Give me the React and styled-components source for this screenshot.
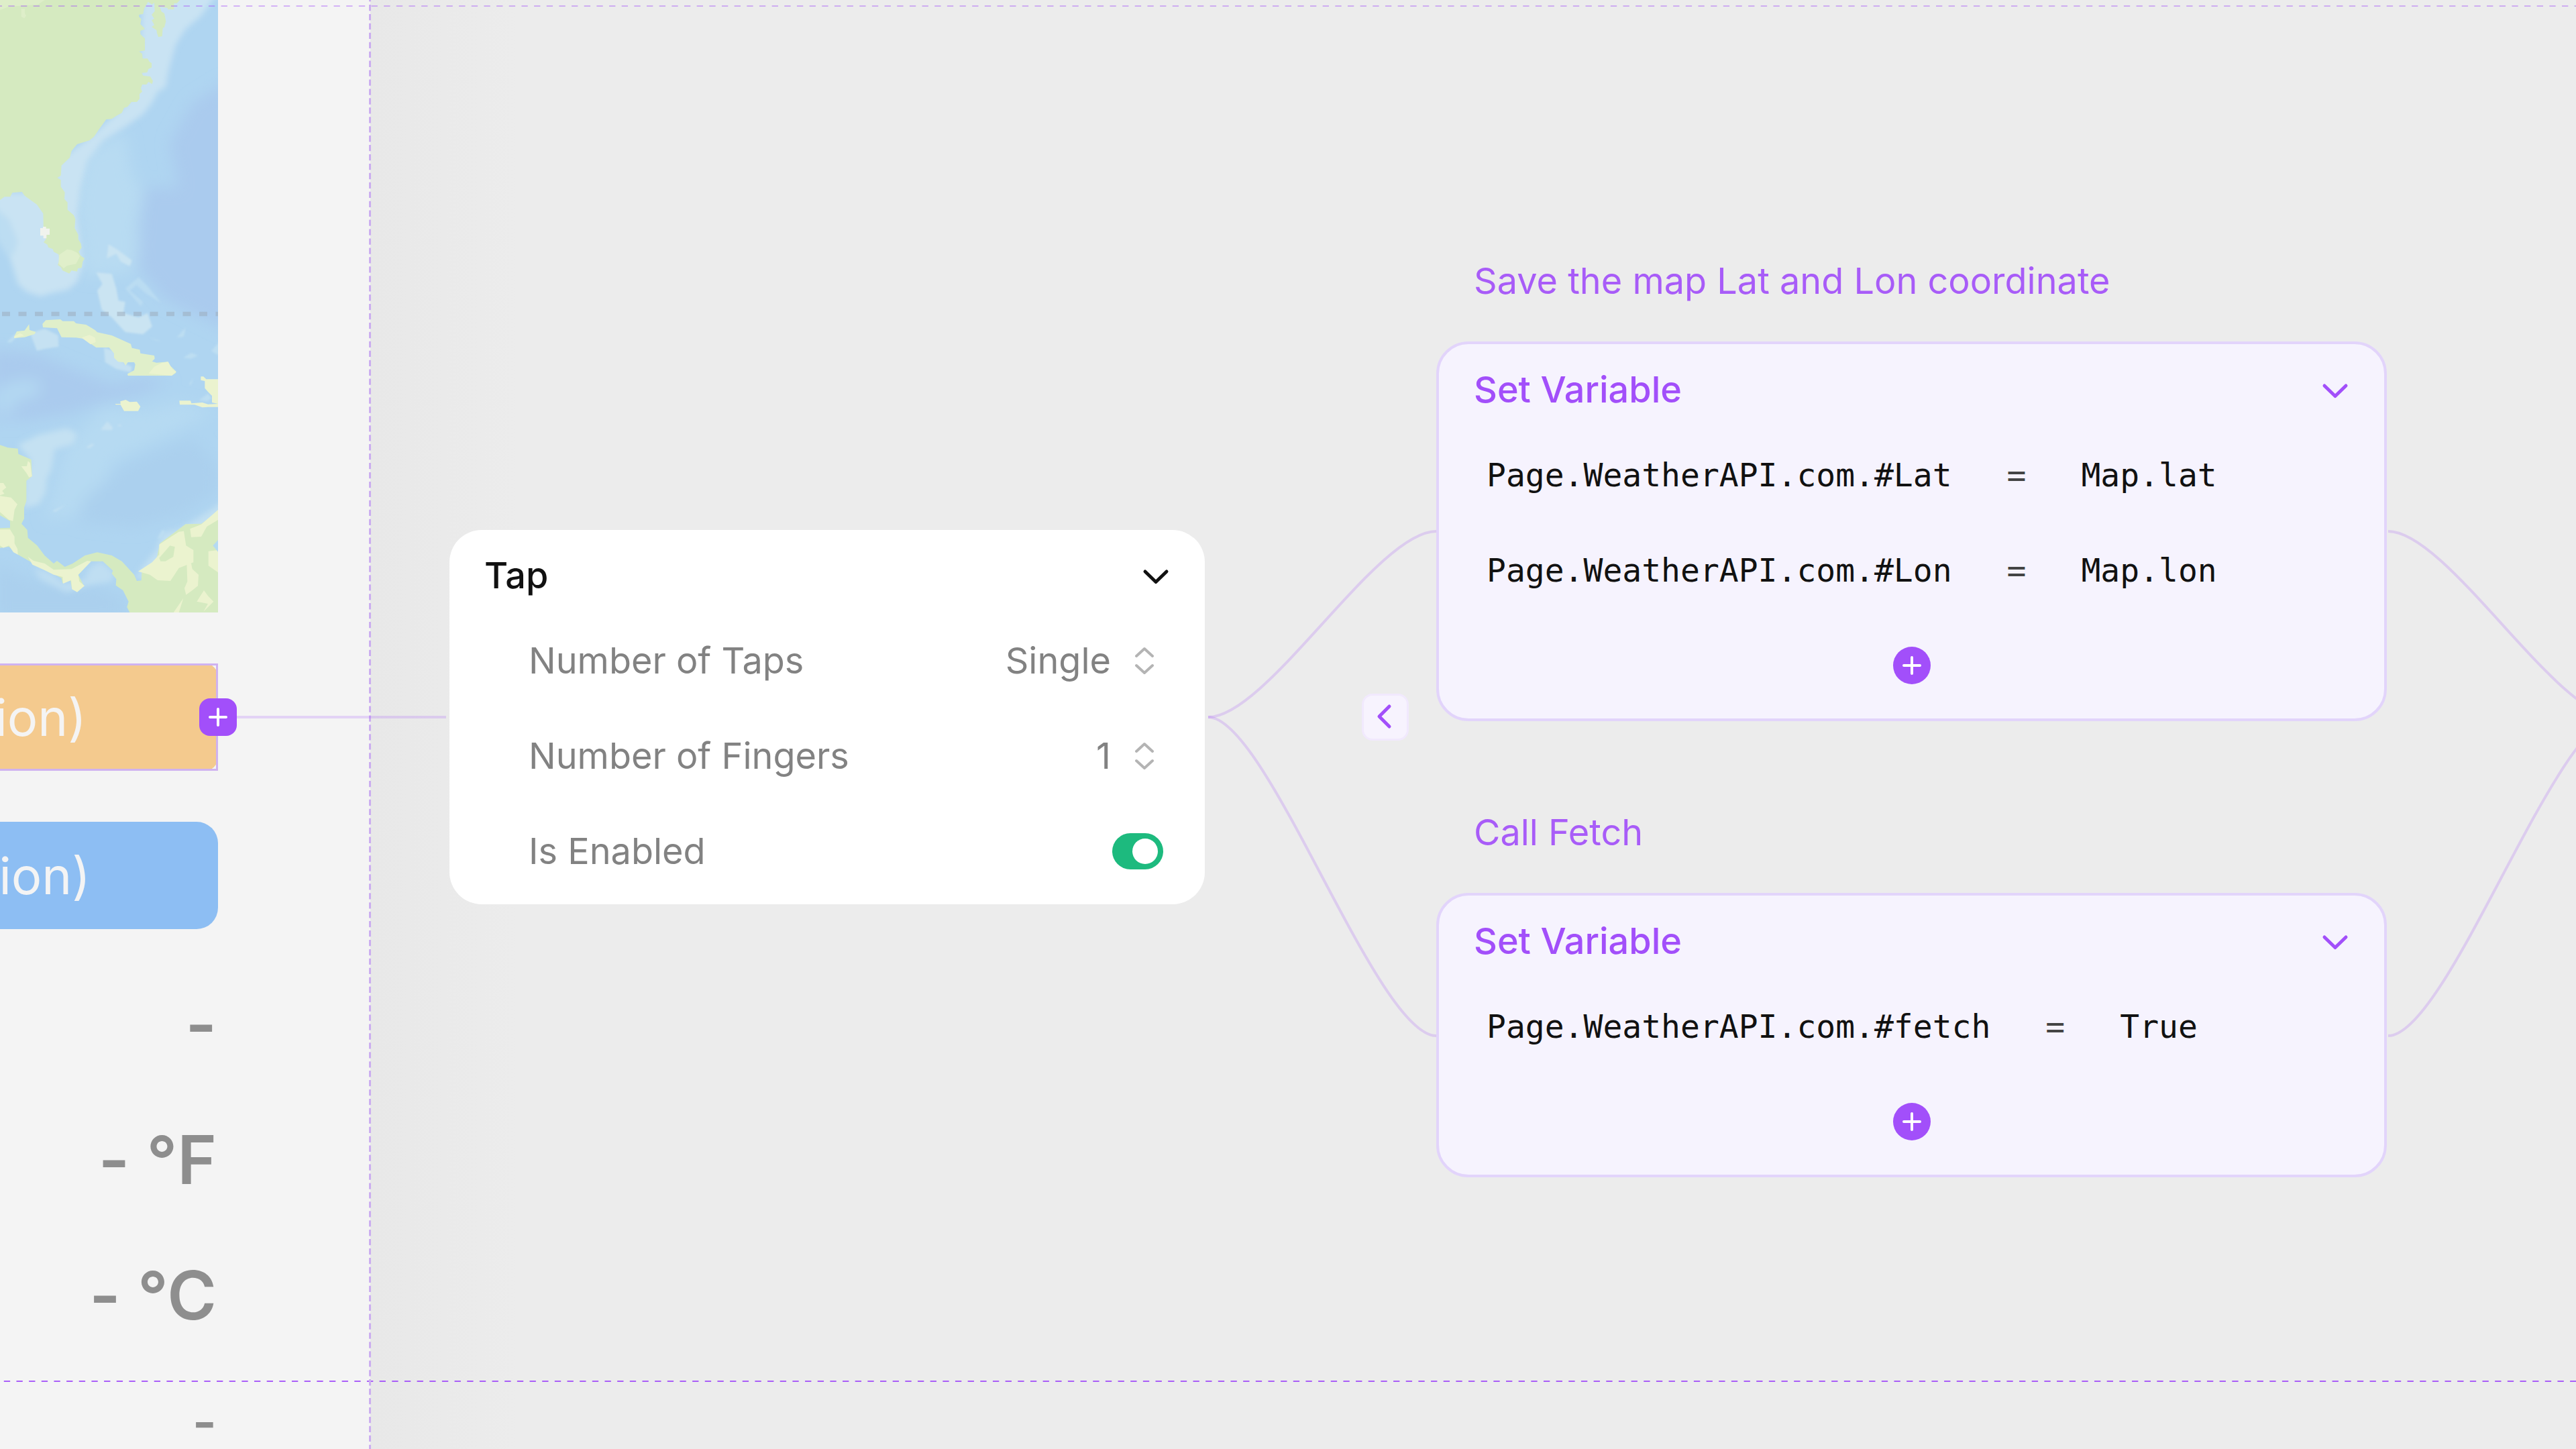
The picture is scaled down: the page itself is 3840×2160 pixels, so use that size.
import React, { useState } from "react";
import styled, { createGlobalStyle, css } from "styled-components";

const GlobalStyle = createGlobalStyle`
  * { box-sizing: border-box; }
  body { margin: 0; background: #ececec; }
  button, select, input { font: inherit; color: inherit; margin: 0; }
`;

const sans = `Inter, "Liberation Sans", sans-serif`;
const mono = `"DejaVu Sans Mono", "Liberation Mono", monospace`;
const purple = "#a24ffa";

const Workspace = styled.main`
  position: relative;
  display: flex;
  height: 100vh;
  overflow: hidden;
  font-family: ${sans};
  font-size: 54px;
  line-height: 64px;
`;

const Screen = styled.section`
  display: flex;
  flex-direction: column;
  flex: none;
  gap: 76px;
  width: 552px;
  background: #f4f4f4;
`;

const Canvas = styled.section`
  flex: 1;
  background: linear-gradient(90deg, #e8e8e8, #ececec 220px);
`;

const MapArt = styled.svg`
  display: block;
  flex: none;
  width: 325px;
  height: 913px;
`;

const Holder = styled.div`
  position: relative;
  width: 325px;
`;

const ScreenButton = styled.button`
  display: flex;
  align-items: center;
  justify-content: flex-end;
  width: 100%;
  height: 160px;
  padding: 0 ${(p) => p.$inset}px 0 0;
  border: 0;
  border-radius: 0 ${(p) => p.$radius}px ${(p) => p.$radius}px 0;
  background: ${(p) => p.$tone};
  color: #f4f4f4;
  font-size: 76px;
  white-space: nowrap;
`;

const Selection = styled.div`
  position: absolute;
  inset: 0 0 0 -4px;
  border: 3px solid #cfb2f0;
  pointer-events: none;
`;

const Connector = styled.button`
  position: absolute;
  top: 52px;
  right: -28px;
  display: grid;
  place-items: center;
  width: 56px;
  height: 56px;
  padding: 0;
  border: 0;
  border-radius: 16px;
  background: ${purple};
  color: #fff;
`;

const Readings = styled.div`
  display: flex;
  flex-direction: column;
  gap: 76px;
  width: 325px;
  padding: 3px 2px 0 0;
  color: #8e8e8e;
  font-weight: 600;
  text-align: right;
`;

const Reading = styled.div`
  font-size: ${(p) => (p.$small ? 78 : 100)}px;
  line-height: ${(p) => (p.$small ? 100 : 126)}px;
`;

const Overlay = styled.svg`
  position: absolute;
  inset: 0;
  width: 100%;
  height: 100%;
  overflow: visible;
  pointer-events: none;
`;

const Node = styled.div`
  position: absolute;
  left: ${(p) => p.$x}px;
  top: ${(p) => p.$y}px;
  width: ${(p) => p.$w}px;
`;

const ActionColumn = styled(Node)`
  display: flex;
  flex-direction: column;
  gap: 134px;
`;

const Action = styled.section`
  display: flex;
  flex-direction: column;
  gap: 58px;
`;

const Note = styled.p`
  margin: 0;
  padding-left: 56px;
  color: #a85cf8;
`;

const Card = styled.div`
  padding: 12px 0 8px;
  border-radius: 48px;
  background: #fff;
  ${(p) =>
    p.$accent &&
    css`
      border: 4px solid #e2d4fb;
      background: #f6f3fe;
    `}
`;

const CardHeader = styled.header`
  display: flex;
  align-items: center;
  justify-content: space-between;
  height: 112px;
  padding: 0 52px;
  color: ${(p) => (p.$accent ? purple : "#111")};
`;

const CardTitle = styled.h2`
  margin: 0;
  font-size: 54px;
  font-weight: 500;
`;

const IconButton = styled.button`
  display: grid;
  place-items: center;
  padding: 0;
  border: 0;
  background: none;
`;

const Field = styled.div`
  display: flex;
  align-items: center;
  justify-content: space-between;
  height: 142px;
  padding: 0 62px 0 118px;
  color: #828282;
`;

const Picker = styled.span`
  display: flex;
  align-items: center;
  gap: 36px;
  padding-right: 14px;
`;

const Select = styled.select`
  appearance: none;
  padding: 0;
  border: 0;
  background: none;
  text-align-last: right;
`;

const Toggle = styled.input`
  appearance: none;
  display: flex;
  align-items: center;
  width: 76px;
  height: 54px;
  padding: 8px;
  border-radius: 27px;
  background: #dcdcdc;
  &::before {
    content: "";
    width: 38px;
    height: 38px;
    border-radius: 50%;
    background: #fff;
  }
  &:checked {
    justify-content: flex-end;
    background: #1dba7e;
  }
`;

const Assignment = styled.div`
  display: flex;
  align-items: center;
  gap: 82px;
  height: 142px;
  padding-left: 71px;
  color: #111;
  font-family: ${mono};
  font-size: 48px;
`;

const Equals = styled.span`
  color: #444;
`;

const AddRow = styled.div`
  display: grid;
  place-items: center;
  height: 142px;
`;

const AddButton = styled.button`
  display: grid;
  place-items: center;
  width: 56px;
  height: 56px;
  padding: 0;
  border: 0;
  border-radius: 50%;
  background: ${purple};
  color: #fff;
`;

const CollapseButton = styled.button`
  display: grid;
  place-items: center;
  width: 70px;
  height: 70px;
  padding: 0;
  border: 3px solid #f1e9fd;
  border-radius: 16px;
  background: #f7f3fe;
  color: ${purple};
`;

const stroke = { fill: "none", stroke: "currentColor", strokeLinecap: "round", strokeLinejoin: "round" };

const ChevronDown = () => (
  <svg width="42" height="32" viewBox="0 0 42 32" {...stroke} strokeWidth="5" aria-hidden="true">
    <path d="M5 10l16 15.500 16-15.500" />
  </svg>
);

const ChevronLeft = () => (
  <svg width="28" height="42" viewBox="0 0 28 42" {...stroke} strokeWidth="5" aria-hidden="true">
    <path d="M20 5L5 20l15 15" />
  </svg>
);

const UpDown = () => (
  <svg width="28" height="42" viewBox="0 0 28 42" {...stroke} stroke="#b4b4b4" strokeWidth="4" aria-hidden="true">
    <path d="M2 14L14 3l12 11M2 28l12 11 12-11" />
  </svg>
);

const Plus = () => (
  <svg width="28" height="28" viewBox="0 0 28 28" {...stroke} strokeWidth="4" aria-hidden="true">
    <path d="M14 2v24M2 14h24" />
  </svg>
);

function MapView() {
  return (
    <MapArt viewBox="0 0 975 2739" preserveAspectRatio="none" role="img" aria-label="Map of the Caribbean">
      <defs>
        <filter id="deep" x="-30%" y="-30%" width="160%" height="160%">
          <feGaussianBlur stdDeviation="32" />
        </filter>
        <filter id="shelf" x="-20%" y="-20%" width="140%" height="140%">
          <feGaussianBlur stdDeviation="13" />
        </filter>
        <filter id="edge" x="-10%" y="-10%" width="120%" height="120%">
          <feGaussianBlur stdDeviation="5" />
        </filter>
      </defs>
      <rect width="975" height="2739" fill="#afd5f1" />

      <g filter="url(#deep)">
        <path fill="#b8dbf2" d="M380 680L560 590 590 780 640 860 610 1010 625 1100 590 1220 380 1240 340 900Z" />
        <path fill="#aacbee" d="M1020 360L860 460 760 640 800 840 650 840 625 1000 620 1200 740 1340 860 1400 1020 1480Z" />
        <path fill="#aacbee" d="M-40 1560L160 1580 300 1640 500 1720 640 1690 760 1710 600 1770 460 1800 300 1850 120 1880 -40 1880Z" />
        <path fill="#b3d8f2" d="M-20 1740L80 1700 180 1700 170 1770 60 1800 60 1850 -20 1850Z" />
        <path fill="#b6daf2" d="M460 1820L640 1840 800 1800 960 1840 760 1940 500 2060 420 2300 200 2320 300 2000Z" />
        <path fill="#abd0ee" d="M560 2080L720 2010 860 1960 975 2080 975 2200 820 2300 600 2360 340 2330 380 2230Z" />
        <path fill="#abd0ee" d="M-20 2520L160 2600 440 2620 560 2680 560 2760 -20 2760Z" />
      </g>

      <g filter="url(#shelf)">
        <path fill="#c9e3f3" d="M640 -40H980L900 70 830 130 785 200 755 310 740 390 705 410 680 460 640 510 570 560 460 630 390 720 360 840 345 960 362 1090 372 1180 345 1260 305 1295 230 1310 180 1325 120 1305 80 1270 50 1170 20 1090 -20 1060V860H120L260 900 240 740 420 600 560 470 620 380Z" />
        <path fill="#bcddf2" d="M-20 930L40 980 80 1080 60 1140 30 1140 -20 1060Z" />
        <path fill="#c4e1f2" d="M80 1990L170 1945 300 1915 345 1940 330 1985 245 2010 230 2100 210 2140 205 2200 175 2255 105 2275 110 2140 140 2060Z" />
        <path fill="#bfdef2" d="M150 2540L220 2560 290 2610 380 2590 400 2540 450 2510 510 2560 500 2600 380 2620 300 2650 180 2590Z" />
        <path fill="#c2e0f2" d="M640 2530L700 2460 720 2400 740 2380 800 2370 960 2270 1000 2240V2330L640 2590 600 2590Z" />
      </g>

      <g filter="url(#edge)">
        <path fill="#cae4f2" d="M430 1218L500 1225 520 1290 530 1345 560 1350 552 1400 620 1420 660 1400 680 1460 640 1495 560 1485 500 1420 455 1385 435 1300 458 1270Z" />
        <path fill="#cae4f2" d="M485 1092L530 1120 590 1165 580 1190 540 1170 520 1135 478 1155Z" />
        <path fill="#badcf2" d="M560 1290L620 1240 660 1280 720 1355 650 1310 610 1275 580 1300 640 1350 630 1370Z" />
        <path fill="#c5e1f2" d="M135 1490L200 1470 260 1500 262 1550 200 1560 165 1568Z" />
        <path fill="#c5e1f2" d="M465 1555L510 1570 555 1625 590 1640 585 1665 520 1650 470 1620Z" />
        <path fill="#c5e1f2" d="M450 1922L480 1885 505 1912 500 1924ZM525 1905l10-8 10 10zM385 2002l25-18 12 4-20 15zM235 2285l60-28-48 32z" />
        <path fill="#bddef2" d="M790 1510l40-45-8 40zM820 1600l35-22 30 12-30 14zM670 1510l50 16-20-2zM945 1570l35-40v60zM845 1718l20-26-12 30zM30 1530l40-40 10 10-30 32zM890 1790l40-30 15 20-15 15zM705 2410l20-40 14 8-20 30z" />
      </g>

      <g fill="#d5eac0">
        <path d="M0 0H805L790 15 778 15 778 42 750 42 750 36 715 30 722 52 735 60 742 95 735 122 728 125 725 162 708 166 702 148 700 135 678 120 690 112 678 90 690 84 678 66 692 50 690 12 680 20 662 8 645 38 640 62 622 66 622 76 632 85 628 108 640 120 648 130 628 138 628 152 640 165 648 172 648 226 622 230 636 240 638 262 660 262 668 276 678 282 678 302 664 308 658 324 634 326 640 338 672 342 684 362 680 376 664 366 655 378 636 378 630 395 636 410 624 420 624 442 612 456 588 456 570 478 555 482 545 505 520 518 500 532 475 534 445 575 420 612 400 628 345 645 320 675 312 705 275 740 272 785 256 795 272 805 272 835 290 860 288 890 302 905 302 938 330 962 337 980 334 1020 350 1050 350 1070 362 1090 365 1108 352 1125 360 1142 378 1156 370 1170 365 1198 348 1200 345 1214 320 1210 310 1223 280 1210 272 1195 258 1185 266 1165 262 1138 240 1126 236 1114 216 1106 212 1094 195 1084 205 1070 195 1040 193 955 165 915 110 875 98 858 55 862 46 880 20 880 0 895Z" />
        <path d="M0 1990L35 2002 80 2006 82 2030 140 2055 143 2130 118 2150 118 2240 108 2270 108 2320 96 2342 122 2370 125 2405 165 2438 200 2485 240 2520 255 2508 290 2535 325 2520 380 2484 435 2470 500 2484 545 2510 600 2570 612 2598 632 2596 634 2560 700 2500 715 2430 830 2344 900 2342 975 2290V2739H580L568 2715 575 2690 550 2640 518 2618 520 2590 500 2565 505 2552 460 2510 405 2510 350 2570 375 2620 345 2645 322 2635 315 2595 280 2608 275 2585 150 2520 80 2480 40 2445 0 2450Z" />
      </g>

      <g fill="#e0efca">
        <path d="M190 1448L205 1432 270 1428 280 1436 330 1436 340 1446 385 1452 425 1476 435 1486 500 1500 585 1538 590 1556 625 1564 628 1580 690 1590 692 1604 680 1616 700 1622 752 1618 756 1632 768 1642 788 1662 786 1668 768 1680 572 1680 570 1672 600 1656 605 1630 600 1620 572 1620 562 1634 552 1620 528 1618 510 1600 510 1580 488 1554 430 1554 395 1530 370 1514 340 1510 275 1508 255 1468 192 1464Z" />
        <path d="M64 1504L75 1482 110 1478 130 1450 132 1476 160 1484 155 1494 110 1508 64 1512Z" />
        <path d="M264 1140L300 1115 320 1118 345 1130 358 1145 340 1180 300 1188 285 1200 262 1180Z" />
        <path d="M0 0H200L170 20 40 30 0 45ZM95 40h16v20l6 10-8 12-14-8z" opacity=".8" />
      </g>

      <g fill="#ebf3cf">
        <path d="M540 1812L538 1795 562 1788 580 1798 612 1796 628 1818 618 1838 555 1838ZM515 1806h25v4h-22zM802 1792H852L856 1804 905 1800 930 1808 975 1806V1820H932L905 1822 870 1810 804 1810Z" />
        <path d="M898 1684L910 1684 922 1696H975V1806L948 1800 948 1770 930 1752 916 1736 916 1704 898 1700Z" />
        <path d="M365 1510L400 1498 425 1510 428 1530 405 1540 385 1525ZM665 1670L690 1640 725 1622 752 1618 770 1650 788 1662 768 1680ZM64 1504L90 1490 108 1500 64 1512Z" />
        <path d="M95 2085L120 2085 125 2062 135 2070 143 2130 130 2135 118 2115ZM0 2160L15 2160 28 2180 10 2195 20 2208 0 2215ZM0 2218L50 2225 78 2255 65 2280 58 2330 40 2325 0 2290Z" />
        <path d="M0 2368L45 2368 65 2400 65 2430 78 2455 80 2480 60 2470 40 2440 15 2450 0 2440Z" />
        <path d="M125 2490L150 2508 200 2520 240 2548 320 2545 390 2508 408 2510 350 2570 355 2600 378 2620 345 2648 322 2635 318 2595 282 2610 280 2580 240 2570 200 2550 145 2525Z" />
        <path d="M618 2555L680 2515 712 2480 712 2435 800 2378 822 2375 832 2440 865 2460 865 2515 800 2540 762 2598 705 2595 670 2570Z" />
        <path d="M850 2365L900 2345 975 2280V2325L925 2355 900 2400 855 2402ZM835 2520L855 2520 860 2545 888 2570 885 2620 860 2640 832 2660 825 2630 838 2600ZM975 2460L932 2465 932 2530 975 2560ZM880 2690L912 2640 930 2665 955 2690 910 2735 930 2700ZM776 2739L820 2675 800 2739Z" />
      </g>
      <path fill="#d5eac0" d="M712 2495L760 2440 782 2445 775 2490 740 2510 718 2510Z" />
      <path fill="#b5daf2" d="M0 2305L45 2330 45 2360 0 2362ZM975 2415L952 2440 975 2468Z" />
      <path fill="#f1f3ee" d="M180 1020h12v-6h14v8h16v28h-14v16h-14v-12h-14z" />
      <path stroke="#9dadbd" strokeOpacity=".55" strokeWidth="20" strokeDasharray="36 37.500" strokeDashoffset="-9" d="M0 1404H975" />
    </MapArt>
  );
}

function Guides() {
  return (
    <Overlay aria-hidden="true">
      <line x1="0" x2="100%" y1="9" y2="9" stroke="#a24ffa" strokeOpacity=".4" strokeWidth="2" strokeDasharray="9.330 9.330" strokeDashoffset="6.300" />
      <line x1="0" x2="100%" y1="2059" y2="2059" stroke="#a24ffa" strokeOpacity=".9" strokeWidth="2" strokeDasharray="9.330 9.330" strokeDashoffset="-5.800" />
      <line x1="551.500" x2="551.500" y1="0" y2="100%" stroke="#cbaef0" strokeWidth="3" strokeDasharray="9.300 4.640" strokeDashoffset="7" />
    </Overlay>
  );
}

function Wires() {
  return (
    <Overlay aria-hidden="true" fill="none" stroke="#a24ffa" strokeOpacity=".2" strokeWidth="4">
      <path d="M353 1069H665" />
      <path d="M1801 1069C1889 1069 2052 792 2141 792" />
      <path d="M1801 1069C1889 1069 2052 1544 2141 1544" />
      <path d="M3560 792C3648 792 3811 1069 3900 1069" />
      <path d="M3560 1544C3648 1544 3811 1069 3900 1069" />
    </Overlay>
  );
}

const actions = [
  {
    note: "Save the map Lat and Lon coordinate",
    rows: [
      ["Page.WeatherAPI.com.#Lat", "Map.lat"],
      ["Page.WeatherAPI.com.#Lon", "Map.lon"],
    ],
  },
  { note: "Call Fetch", rows: [["Page.WeatherAPI.com.#fetch", "True"]] },
];

function VariableAction({ note, rows }) {
  return (
    <Action>
      <Note>{note}</Note>
      <Card $accent>
        <CardHeader $accent>
          <CardTitle>Set Variable</CardTitle>
          <IconButton aria-label="Collapse Set Variable">
            <ChevronDown />
          </IconButton>
        </CardHeader>
        {rows.map(([name, value]) => (
          <Assignment key={name}>
            <span>{name}</span>
            <Equals>=</Equals>
            <span>{value}</span>
          </Assignment>
        ))}
        <AddRow>
          <AddButton aria-label="Add variable">
            <Plus />
          </AddButton>
        </AddRow>
      </Card>
    </Action>
  );
}

function TapCard() {
  const [enabled, setEnabled] = useState(true);
  return (
    <Card>
      <CardHeader>
        <CardTitle>Tap</CardTitle>
        <IconButton aria-label="Collapse Tap">
          <ChevronDown />
        </IconButton>
      </CardHeader>
      <Field>
        <label htmlFor="taps">Number of Taps</label>
        <Picker>
          <Select id="taps" defaultValue="Single">
            <option>Single</option>
          </Select>
          <UpDown />
        </Picker>
      </Field>
      <Field>
        <label htmlFor="fingers">Number of Fingers</label>
        <Picker>
          <Select id="fingers" defaultValue="1">
            <option>1</option>
          </Select>
          <UpDown />
        </Picker>
      </Field>
      <Field>
        <label htmlFor="enabled">Is Enabled</label>
        <Toggle id="enabled" type="checkbox" checked={enabled} onChange={(e) => setEnabled(e.target.checked)} />
      </Field>
    </Card>
  );
}

export default function App() {
  return (
    <>
      <GlobalStyle />
      <Workspace>
        <Screen>
          <MapView />
          <Holder>
            <ScreenButton $tone="#f4ca8e" $radius={20} $inset={196}>ion)</ScreenButton>
            <Selection />
            <Connector aria-label="Add interaction">
              <Plus />
            </Connector>
          </Holder>
          <Holder>
            <ScreenButton $tone="#8dbef3" $radius={32} $inset={190}>ion)</ScreenButton>
          </Holder>
          <Readings>
            <Reading>-</Reading>
            <Reading>- °F</Reading>
            <Reading>- °C</Reading>
            <Reading $small>-</Reading>
          </Readings>
        </Screen>
        <Canvas />
        <Guides />
        <Wires />
        <Node $x={670} $y={790} $w={1126}>
          <TapCard />
        </Node>
        <Node $x={2030} $y={1034} $w={70}>
          <CollapseButton aria-label="Collapse actions">
            <ChevronLeft />
          </CollapseButton>
        </Node>
        <ActionColumn $x={2141} $y={387} $w={1417}>
          {actions.map((action) => (
            <VariableAction key={action.note} {...action} />
          ))}
        </ActionColumn>
      </Workspace>
    </>
  );
}
